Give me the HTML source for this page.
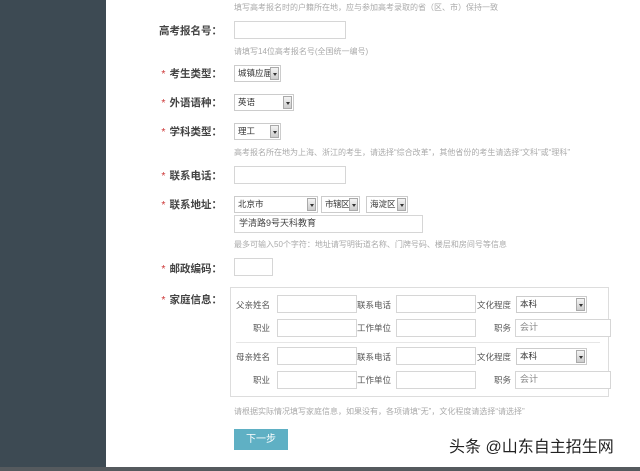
<!DOCTYPE html>
<html><head><meta charset="utf-8"><style>
*{margin:0;padding:0;box-sizing:border-box}
body{width:640px;height:471px;background:#fff;position:relative;overflow:hidden;font-family:"Liberation Sans","Noto Sans CJK SC",sans-serif;color:#333}
.a{position:absolute}
.lbl{position:absolute;width:120px;text-align:right;font-size:10.5px;font-weight:bold;color:#444;line-height:14px}
.lbl b{color:#c33;font-weight:normal;margin-right:4px}
.hint{position:absolute;left:234px;font-size:8px;color:#aaa;line-height:10px;white-space:nowrap}
.in{position:absolute;border:1px solid #d6d6d6;background:#fff;font-size:9px;line-height:15px;padding-left:4px;color:#444}
.sel{position:absolute;border:1px solid #ccc;background:#fff;font-size:8.5px;padding-left:3px;color:#333;overflow:hidden;white-space:nowrap}
.sel i{position:absolute;right:1px;top:1px;bottom:1px;width:9px;background:linear-gradient(#f4f4f4,#ccc);border:1px solid #aaa}
.sel i:after{content:"";position:absolute;left:2px;top:5px;border:2px solid transparent;border-top:3px solid #333}
.fl{position:absolute;font-size:8.5px;color:#555;text-align:right;width:40px;line-height:12px}
</style></head><body>
<div class="a" style="left:0;top:0;width:106px;height:471px;background:#3d4a53"></div>
<div class="a" style="left:0;top:467px;width:640px;height:4px;background:#555a5e"></div>

<div class="hint" style="top:3px">填写高考报名时的户籍所在地，应与参加高考录取的省（区、市）保持一致</div>

<div class="lbl" style="left:102px;top:24px">高考报名号：</div>
<div class="in" style="left:234px;top:21px;width:112px;height:18px"></div>
<div class="hint" style="top:47px">请填写14位高考报名号(全国统一编号)</div>

<div class="lbl" style="left:102px;top:67px"><b>*</b>考生类型：</div>
<div class="sel" style="left:234px;top:65px;width:47px;height:17px;line-height:15px">城镇应届<i></i></div>

<div class="lbl" style="left:102px;top:96px"><b>*</b>外语语种：</div>
<div class="sel" style="left:234px;top:94px;width:60px;height:17px;line-height:15px">英语<i></i></div>

<div class="lbl" style="left:102px;top:125px"><b>*</b>学科类型：</div>
<div class="sel" style="left:234px;top:123px;width:47px;height:17px;line-height:15px">理工<i></i></div>
<div class="hint" style="top:148px">高考报名所在地为上海、浙江的考生，请选择“综合改革”，其他省份的考生请选择“文科”或“理科”</div>

<div class="lbl" style="left:102px;top:169px"><b>*</b>联系电话：</div>
<div class="in" style="left:234px;top:166px;width:112px;height:18px"></div>

<div class="lbl" style="left:102px;top:198px"><b>*</b>联系地址：</div>
<div class="sel" style="left:234px;top:196px;width:84px;height:17px;line-height:15px">北京市<i></i></div>
<div class="sel" style="left:321px;top:196px;width:39px;height:17px;line-height:15px;letter-spacing:-0.5px">市辖区<i></i></div>
<div class="sel" style="left:366px;top:196px;width:42px;height:17px;line-height:15px">海淀区<i></i></div>
<div class="in" style="left:234px;top:215px;width:189px;height:18px">学清路9号天科教育</div>
<div class="hint" style="top:240px">最多可输入50个字符：地址请写明街道名称、门牌号码、楼层和房间号等信息</div>

<div class="lbl" style="left:102px;top:262px"><b>*</b>邮政编码：</div>
<div class="in" style="left:234px;top:258px;width:39px;height:18px"></div>

<div class="lbl" style="left:102px;top:293px"><b>*</b>家庭信息：</div>
<div class="a" style="left:230px;top:287px;width:379px;height:110px;border:1px solid #ddd"></div>

<div class="fl" style="left:230px;top:299px">父亲姓名</div>
<div class="in" style="left:277px;top:295px;width:80px;height:18px"></div>
<div class="fl" style="left:351px;top:299px">联系电话</div>
<div class="in" style="left:396px;top:295px;width:80px;height:18px"></div>
<div class="fl" style="left:471px;top:299px">文化程度</div>
<div class="sel" style="left:516px;top:296px;width:71px;height:17px;line-height:15px">本科<i></i></div>

<div class="fl" style="left:230px;top:322px">职业</div>
<div class="in" style="left:277px;top:319px;width:80px;height:18px"></div>
<div class="fl" style="left:351px;top:322px">工作单位</div>
<div class="in" style="left:396px;top:319px;width:80px;height:18px"></div>
<div class="fl" style="left:471px;top:322px">职务</div>
<div class="in" style="left:515px;top:319px;width:96px;height:18px;color:#888">会计</div>

<div class="a" style="left:236px;top:342px;width:364px;height:1px;background:#e6e6e6"></div>

<div class="fl" style="left:230px;top:351px">母亲姓名</div>
<div class="in" style="left:277px;top:347px;width:80px;height:18px"></div>
<div class="fl" style="left:351px;top:351px">联系电话</div>
<div class="in" style="left:396px;top:347px;width:80px;height:18px"></div>
<div class="fl" style="left:471px;top:351px">文化程度</div>
<div class="sel" style="left:516px;top:348px;width:71px;height:17px;line-height:15px">本科<i></i></div>

<div class="fl" style="left:230px;top:374px">职业</div>
<div class="in" style="left:277px;top:371px;width:80px;height:18px"></div>
<div class="fl" style="left:351px;top:374px">工作单位</div>
<div class="in" style="left:396px;top:371px;width:80px;height:18px"></div>
<div class="fl" style="left:471px;top:374px">职务</div>
<div class="in" style="left:515px;top:371px;width:96px;height:18px;color:#888">会计</div>

<div class="hint" style="top:407px">请根据实际情况填写家庭信息，如果没有，各项请填“无”，文化程度请选择“请选择”</div>

<div class="a" style="left:234px;top:429px;width:54px;height:21px;background:#5fb0c4;color:#fff;font-size:10px;text-align:center;line-height:21px">下一步</div>

<div class="a" style="left:449px;top:438px;font-size:16px;color:#222;white-space:nowrap;line-height:20px">头条 @山东自主招生网</div>
</body></html>
